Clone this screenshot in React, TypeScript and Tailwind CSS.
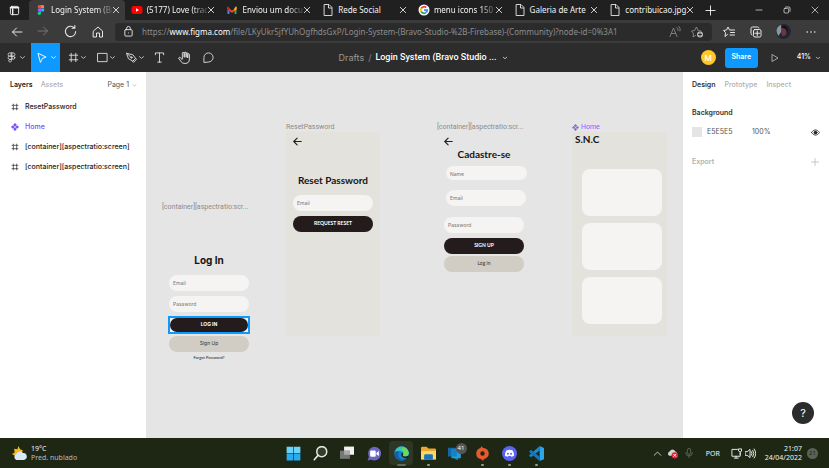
import React from "react";

type P = { className?: string; children?: React.ReactNode };

const ui = "font-['Noto_Sans','Open_Sans',sans-serif]";

function Line({ className = "size-3", children }: P) {
  return (
    <svg viewBox="0 0 24 24" className={"shrink-0 " + className} fill="none" stroke="currentColor" strokeWidth="2" strokeLinecap="round" strokeLinejoin="round" aria-hidden="true">
      {children}
    </svg>
  );
}

const Chevron = ({ className = "size-2" }: P) => (
  <Line className={className}><path d="M5 9l7 6 7-6" strokeWidth="2.6" /></Line>
);
const Frame = ({ className }: P) => (
  <Line className={className}><path d="M7 2v20M17 2v20M2 7h20M2 17h20" strokeLinecap="butt" /></Line>
);
const Back = ({ className }: P) => (
  <Line className={className}><path d="M22 12H3M11 4l-8 8 8 8" /></Line>
);
const ScreenBack = () => (
  <Line className="size-[9px] text-[#222]"><path d="M22 12H3M11 3l-9 9 9 9" strokeWidth="3" /></Line>
);
const Component = ({ className = "size-2" }: P) => (
  <svg viewBox="0 0 24 24" className={"shrink-0 " + className} fill="currentColor" aria-hidden="true">
    <path d="M12 0l5.500 5.500-5.500 5.500-5.500-5.500zM12 13l5.500 5.500-5.500 5.500-5.500-5.500zM5.500 6.500l5.500 5.500-5.500 5.500L0 12zM18.500 6.500L24 12l-5.500 5.500L13 12z" />
  </svg>
);
const Page = () => (
  <Line className="size-3 text-gray-200"><path d="M5 1h9l6 6v16H5zM13 2v6h6" strokeWidth="1.8" /></Line>
);
const Figma = () => (
  <svg viewBox="0 0 16 24" className="h-[10px] w-3 shrink-0" aria-hidden="true">
    <path d="M8 0H4a4 4 0 000 8h4z" fill="#f24e1e" />
    <path d="M8 0h4a4 4 0 010 8H8z" fill="#ff7262" />
    <path d="M8 8H4a4 4 0 000 8h4z" fill="#a259ff" />
    <circle cx="12" cy="12" r="4" fill="#1abcfe" />
    <path d="M8 16H4a4 4 0 104 4z" fill="#0acf83" />
  </svg>
);
const YouTube = () => (
  <svg viewBox="0 0 24 24" className="size-3 shrink-0" aria-hidden="true">
    <rect x="1" y="4" width="22" height="16" rx="5" fill="#f00" />
    <path d="M10 8.500v7l6-3.500z" fill="#fff" />
  </svg>
);
const Gmail = () => (
  <svg viewBox="0 0 24 24" className="size-3 shrink-0" aria-hidden="true">
    <path d="M3 6v14h4V9z" fill="#4285f4" />
    <path d="M21 6v14h-4V9z" fill="#34a853" />
    <path d="M3 6l9 7 9-7v5l-9 7-9-7z" fill="#ea4335" />
    <path d="M17 8l4-4v7l-4 3z" fill="#fbbc04" />
    <path d="M3 4l4 4v6l-4-3z" fill="#c5221f" />
  </svg>
);
const Google = () => (
  <svg viewBox="0 0 24 24" className="size-3 shrink-0" aria-hidden="true">
    <circle cx="12" cy="12" r="11" fill="#fff" />
    <g fill="none" strokeWidth="3.500">
      <path d="M6.300 9A6.500 6.500 0 0116.500 7.200" stroke="#ea4335" />
      <path d="M6.300 15a6.500 6.500 0 010-6" stroke="#fbbc05" />
      <path d="M16.500 16.800A6.500 6.500 0 016.300 15" stroke="#34a853" />
      <path d="M12 12h6.500a6.500 6.500 0 01-2 4.800" stroke="#4285f4" />
    </g>
  </svg>
);

const fade = "[mask-image:linear-gradient(to_right,black_75%,transparent_105%)]";

const tabs = [
  { icon: <Figma />, title: "Login System (Br", active: true, long: true },
  { icon: <YouTube />, title: "(5177) Love (trad", long: true },
  { icon: <Gmail />, title: "Enviou um docu", long: true },
  { icon: <Page />, title: "Rede Social" },
  { icon: <Google />, title: "menu icons 150", long: true },
  { icon: <Page />, title: "Galeria de Arte" },
  { icon: <Page />, title: "contribuicao.jpg" },
];

function IconButton({ label, className = "", children }: P & { label: string }) {
  return (
    <button type="button" aria-label={label} className={"flex shrink-0 items-center justify-center " + className}>
      {children}
    </button>
  );
}

function BrowserTabs() {
  return (
    <div className={"flex h-5 items-stretch bg-[#202020] text-[8px] text-gray-100 " + ui}>
      <IconButton label="Tab actions" className="w-[29px]">
        <Line className="size-[11px]"><rect x="3" y="3" width="18" height="18" rx="3" /><path d="M3 6h18M8 9v12" strokeWidth="3" /></Line>
      </IconButton>
      <div className="flex min-w-0 flex-[0_1_670px]">
        {tabs.map((t) => (
          <div key={t.title} className={"flex min-w-0 flex-1 items-center pr-[5px] pl-[6px] " + (t.active ? "rounded-t bg-[#3b3b3b]" : "relative after:absolute after:right-0 after:h-3 after:w-px after:bg-[#4a4a4a]")}>
            {t.icon}
            <button type="button" className={"ml-1 min-w-0 flex-1 text-left whitespace-nowrap " + (t.long ? fade : "")}>{t.title}</button>
            <IconButton label={"Close " + t.title} className="w-2">
              <Line className="size-2"><path d="M4 4l16 16M20 4L4 20" strokeWidth="2.500" /></Line>
            </IconButton>
          </div>
        ))}
      </div>
      <IconButton label="New tab" className="w-[22px]"><Line className="size-[11px]"><path d="M12 2v20M2 12h20" /></Line></IconButton>
      <div className="ml-auto flex">
        <IconButton label="Minimize" className="w-7"><Line className="size-2"><path d="M3 12h18" /></Line></IconButton>
        <IconButton label="Restore" className="w-7"><Line className="size-2"><rect x="3" y="7" width="14" height="14" rx="3" /><path d="M8 3h10a3 3 0 013 3v10" /></Line></IconButton>
        <IconButton label="Close window" className="w-7"><Line className="size-2"><path d="M3 3l18 18M21 3L3 21" /></Line></IconButton>
      </div>
    </div>
  );
}

function AddressRow() {
  return (
    <div className={"flex h-[23px] items-center border-b border-[#505050] bg-[#3b3b3b] text-gray-200 " + ui}>
      <nav className="flex w-[115px] shrink-0 pl-[3px]">
        <IconButton label="Back" className="w-[27px]"><Back className="size-3" /></IconButton>
        <IconButton label="Forward" className="w-[27px] rotate-180 text-[#777]"><Back className="size-3" /></IconButton>
        <IconButton label="Refresh" className="w-[27px]"><Line className="size-[13px]"><path d="M19 5.500A9.500 9.500 0 1021.500 12M20 1v5h-5" /></Line></IconButton>
        <IconButton label="Home" className="w-[27px]"><Line className="size-3"><path d="M3 10l9-8 9 8v12h-6v-8H9v8H3z" /></Line></IconButton>
      </nav>
      <label className="flex h-[18px] min-w-0 flex-1 items-center rounded bg-[#2b2b2b] pr-1 pl-2 text-[8px] text-[#8d8d8d]">
        <Line className="mr-2 size-[11px] text-gray-200"><rect x="4" y="8" width="16" height="14" rx="2" /><path d="M8 8V5a4 4 0 018 0v3M12 15h.01" /></Line>
        <span>https://</span>
        <span className="text-white">www.figma.com</span>
        <input aria-label="Address" className="min-w-0 flex-1 bg-transparent outline-none" defaultValue="/file/LKyUkr5jfYUhOgfhdsGxP/Login-System-(Bravo-Studio-%2B-Firebase)-(Community)?node-id=0%3A1" />
        <IconButton label="Read aloud" className="w-[22px]"><Line className="size-3"><path d="M2 21L9 4l7 17M5 15h8M16 3q3 2 2 6M20 1q4 4 2 9" strokeWidth="1.700" /></Line></IconButton>
        <IconButton label="Add to favourites" className="w-[22px]">
          <Line className="size-3"><path d="M9 19l-5 3 1-7-4-5 6-1 4-7 3 7 6 1" strokeWidth="1.800" /><circle cx="18" cy="17" r="6" fill="#bbb" stroke="none" /><path d="M18 14v6M15 17h6" stroke="#2b2b2b" /></Line>
        </IconButton>
      </label>
      <div className="ml-[3px] flex shrink-0">
        <IconButton label="Favourites" className="w-[27px]"><Line className="size-3"><path d="M9 17l-5 4 1-8-4-4 6-1 3-6 3 6h10M15 13h8M14 18h9" /></Line></IconButton>
        <IconButton label="Collections" className="w-[27px]"><Line className="size-3"><rect x="7" y="7" width="15" height="15" rx="3" /><path d="M4 18a3 3 0 01-2-3V5a3 3 0 013-3h10a3 3 0 013 2M14.500 10v9M10 14.500h9" /></Line></IconButton>
        <IconButton label="Profile" className="w-[28px]">
          <svg viewBox="0 0 24 24" className="size-[15px]"><circle cx="12" cy="12" r="12" fill="#222536" /><path d="M2 6a12 12 0 016-5l1 10-5 8a12 12 0 01-2-13" fill="#8597a5" /><path d="M9 6q6-4 8 3l-1 8-5 3-3-6z" fill="#6e3736" /><path d="M8 5q6-6 10 1l1 9-4-7z" fill="#16111a" /></svg>
        </IconButton>
        <IconButton label="Settings and more" className="w-[32px] pr-1"><Line className="size-[10px]"><path d="M3 12h.01M12 12h.01M21 12h.01" strokeWidth="4" /></Line></IconButton>
      </div>
    </div>
  );
}

function FigmaToolbar() {
  return (
    <header className="grid h-[29px] grid-cols-[1fr_auto_1fr] items-center bg-[#2c2c2c] font-['Inter',sans-serif] text-[8px] text-[#ddd]">
      <div className="flex h-full">
        <IconButton label="Main menu" className="w-[31px] gap-[2px]">
          <Line className="size-[11px]"><path d="M12 2H8a3 3 0 000 7h4zM12 2h4a3 3 0 010 7h-4zM12 9H8a3 3 0 000 7h4zM12 16H8a3 3 0 104 3z" strokeWidth="1.800" /><circle cx="16" cy="12.500" r="3.300" strokeWidth="1.800" /></Line><Chevron className="size-[7px]" />
        </IconButton>
        <IconButton label="Move" className="mr-[3px] w-[29px] gap-[3px] bg-[#0d99ff] pl-px text-white">
          <Line className="size-[11px]"><path d="M5 3l17 8-8 3-4 8z" /></Line><Chevron className="size-[7px]" />
        </IconButton>
        <IconButton label="Frame" className="w-[29px] gap-px"><Frame className="size-[11px]" /><Chevron className="size-[7px]" /></IconButton>
        <IconButton label="Rectangle" className="w-[29px] gap-px"><Line className="size-[11px]"><path d="M2 3h20v18H2z" /></Line><Chevron className="size-[7px]" /></IconButton>
        <IconButton label="Pen" className="w-[29px] gap-px"><Line className="size-[11px]"><path d="M2 3l13 3 6 8-6 6-9-5zM2 3l9 9M15 20l6-6 2 2-6 6z" /><circle cx="12" cy="12" r="1.500" /></Line><Chevron className="size-[7px]" /></IconButton>
        <IconButton label="Text" className="w-[18px]"><Line className="size-[11px]"><path d="M3 6V2h18v4M12 2v20M8 22h8" /></Line></IconButton>
        <IconButton label="Hand" className="w-8"><Line className="size-[13px]"><path d="M7 15L4 12q-2-1-3 1l5 7q2 3 7 3 8 0 8-8V6q-2-2-3 0v6M18 12V4q-2-2-3 0v7M15 11V3q-2-2-3.500 0v8M11.500 11V4Q9-0 8 4v11" strokeWidth="1.800" /></Line></IconButton>
        <IconButton label="Comment" className="w-4"><Line className="size-[11px]"><path d="M2 22V12a10 10 0 1110 10z" /></Line></IconButton>
      </div>
      <div className="flex items-center gap-1 pl-[18px] text-[9px]">
        <a href="#drafts" className="text-[#999]">Drafts</a>
        <span className="text-[#888]">/</span>
        <button type="button" className="flex items-center gap-[6px] font-['Roboto',sans-serif] font-medium whitespace-nowrap text-white">Login System (Bravo Studio ...<Chevron className="size-[6px]" /></button>
      </div>
      <div className="flex items-center justify-end">
        <span className="mr-[9px] flex size-[15px] items-center justify-center rounded-full bg-[#ffc727] font-medium text-white">M</span>
        <button type="button" className="h-5 w-[33px] rounded-[3px] bg-[#0d99ff] text-[7px] font-semibold text-white">Share</button>
        <IconButton label="Present" className="mr-1 w-[35px]"><Line className="size-2"><path d="M4 2l17 10L4 22z" /></Line></IconButton>
        <label className="flex items-center gap-1 pr-2">
          <select aria-label="Zoom" className="appearance-none bg-transparent text-[7px] font-medium text-white [field-sizing:content]"><option>41%</option></select>
          <Chevron className="size-[6px]" />
        </label>
      </div>
    </header>
  );
}

const layers = [
  { name: "ResetPassword" },
  { name: "Home", component: true },
  { name: "[container][aspectratio:screen]" },
  { name: "[container][aspectratio:screen]" },
];

function LayersPanel() {
  return (
    <aside className="border-r border-[#e5e5e5] bg-white text-[#222]">
      <div className="flex h-[26px] items-center border-b border-[#e5e5e5] pr-[9px] pl-[10px]">
        <button type="button" className="font-semibold">Layers</button>
        <button type="button" className="ml-2 font-medium text-[#b0b0b0]">Assets</button>
        <label className="ml-auto flex items-center gap-[3px] text-[#555]">
          <select aria-label="Page" className="appearance-none bg-transparent [field-sizing:content]"><option>Page 1</option></select>
          <Chevron className="size-[5px] text-[#999]" />
        </label>
      </div>
      <ul className="-mt-px">
        {layers.map((l, i) => (
          <li key={i} className={l.component ? "text-[#7b4dff]" : ""}>
            <button type="button" className="flex h-5 w-full items-center gap-[6px] pl-[11px] font-medium">
              {l.component ? <Component /> : <Frame className="size-2" />}
              {l.name}
            </button>
          </li>
        ))}
      </ul>
    </aside>
  );
}

const design = "font-['Lato',sans-serif]";

function Field({ label, className = "h-4 w-20" }: { label: string; className?: string }) {
  return <input aria-label={label} placeholder={label} className={"block shrink-0 rounded-full bg-[#f5f4f2] px-1 font-['Inter',sans-serif] text-[5px] font-medium placeholder:text-black placeholder:opacity-100 " + className} />;
}
function Pill({ dark, size = "h-4 w-20", className = "", children }: P & { dark?: boolean; size?: string }) {
  return <button type="button" className={"block shrink-0 rounded-full text-[5px] " + size + " " + (dark ? "bg-[#241c1c] font-bold text-white " : "bg-[#d1cdc4] text-[#333] ") + className}>{children}</button>;
}
const Label = ({ className = "text-[#8c8c8c]", children }: P) => (
  <div className={"flex h-[10px] items-center gap-[2px] font-['Roboto',sans-serif] text-[7px] whitespace-nowrap " + className}>{children}</div>
);
const Title = ({ className = "", children }: P) => (
  <h2 className={"text-center text-[10px] leading-[12px] font-bold whitespace-nowrap text-[#181314] " + className}>{children}</h2>
);

function Canvas() {
  return (
    <main className={"relative min-w-0 overflow-hidden bg-[#e5e5e5] " + design}>
      <section className="absolute top-[130px] left-4 w-[94px]">
        <Label>[container][aspectratio:scr...</Label>
        <div className="px-[7px] pt-[42px]">
          <Title className="font-['Inter',sans-serif]">Log In</Title>
          <div className="mt-[9px] flex flex-col gap-[5px]">
            <Field label="Email" />
            <Field label="Password" />
            <div className="-m-px h-[18px] w-[82px] bg-[#0d99ff] p-[2px]">
              <div className="h-full bg-[#f1f2f4]">
                <Pill dark size="h-full w-full" className="font-['Inter',sans-serif]">LOG IN</Pill>
              </div>
            </div>
          </div>
          <Pill className="mt-[3px] font-['Inter',sans-serif]">Sign Up</Pill>
          <a href="#forgot" className="mt-[2px] block text-center text-[4px] leading-[7px] text-[#222]">Forgot Password?</a>
        </div>
      </section>

      <section className="absolute top-[50px] left-[140px] w-[94px]">
        <Label>ResetPassword</Label>
        <div className="h-[204px] bg-[#e3e2dc] px-[7px] pt-[5px]">
          <ScreenBack />
          <Title className="mt-7">Reset Password</Title>
          <div className="mt-[9px] flex flex-col gap-[5px]">
            <Field label="Email" />
            <Pill dark>REQUEST RESET</Pill>
          </div>
        </div>
      </section>

      <section className="absolute top-[50px] left-[291px] w-[94px]">
        <Label>[container][aspectratio:scr...</Label>
        <div className="px-[7px] pt-[5px]">
          <ScreenBack />
          <Title className="mt-[2px]">Cadastre-se</Title>
          <div className="ml-[2px] flex flex-col gap-[10px] pt-[6px]">
            <Field label="Name" className="h-[14px] w-[81px] pt-[2px]" />
            <Field label="Email" />
          </div>
          <div className="mt-[11px] flex flex-col gap-[5px]">
            <Field label="Password" />
            <Pill dark>SIGN UP</Pill>
          </div>
          <Pill className="mt-[2px]">Log in</Pill>
        </div>
      </section>

      <section className="absolute top-[50px] left-[426px] w-[95px]">
        <Label className="text-[#8a63ff]"><Component className="size-[7px]" />Home</Label>
        <div className="h-[204px] bg-[#e3e2dc] px-[3px] pt-px">
          <Title className="text-left">S.N.C</Title>
          <div className="mt-6 ml-[7px] flex flex-col gap-[7px]">
            {[0, 1, 2].map((n) => (
              <div key={n} className="h-[47px] w-20 rounded-lg bg-[#f5f4f2] ring-1 ring-[#eae9e3]" />
            ))}
          </div>
        </div>
      </section>
    </main>
  );
}

function DesignPanel() {
  return (
    <aside className="relative border-l border-[#e5e5e5] bg-white text-[#333]">
      <div className="flex h-[26px] items-center gap-[9px] border-b border-[#e5e5e5] pl-[9px] font-medium text-[#b0b0b0]">
        <button type="button" className="font-semibold text-[#333]">Design</button>
        <button type="button">Prototype</button>
        <button type="button">Inspect</button>
      </div>
      <section className="h-[49px] border-b border-[#e5e5e5] px-[9px] pt-[10px]">
        <h3 className="leading-[10px] font-semibold">Background</h3>
        <div className="mt-[9px] flex h-[10px] items-center text-[#555]">
          <span className="size-[10px] border border-[#ddd] bg-[#e5e5e5]" />
          <input aria-label="Colour" defaultValue="E5E5E5" className="ml-[5px] w-[45px] bg-transparent" />
          <input aria-label="Opacity" defaultValue="100%" className="w-[30px] bg-transparent" />
          <IconButton label="Toggle visibility" className="ml-auto text-[#222]">
            <Line className="size-[9px]"><path d="M1 12q11-15 22 0-11 15-22 0z" /><circle cx="12" cy="12" r="4" fill="currentColor" /></Line>
          </IconButton>
        </div>
      </section>
      <section className="flex h-[30px] items-center justify-between border-b border-[#e5e5e5] pr-[10px] pl-[9px] text-[#b0b0b0]">
        <h3 className="font-semibold">Export</h3>
        <IconButton label="Add export"><Line className="size-2"><path d="M12 1v22M1 12h22" /></Line></IconButton>
      </section>
      <button type="button" aria-label="Help" className="absolute right-[15px] bottom-[14px] flex size-[22px] items-center justify-center rounded-full bg-[#2c2c2c] text-[11px] text-white">?</button>
    </aside>
  );
}

const apps: { name: string; running?: boolean; active?: boolean; badge?: string; art: React.ReactNode }[] = [
  { name: "Start", art: <><path d="M1 1h10.500v10.500H1zM12.500 1H23v10.500H12.500z" fill="#6bd3fa" /><path d="M1 12.500h10.500V23H1zM12.500 12.500H23V23H12.500z" fill="#27acf2" /></> },
  { name: "Search", art: <><circle cx="14" cy="9" r="8" fill="#343d2c" stroke="#e5e7e2" strokeWidth="2.400" /><path d="M8 15l-6 7" stroke="#e5e7e2" strokeWidth="2.600" strokeLinecap="round" /></> },
  { name: "Task view", art: <><path d="M7 1h17v14H7z" fill="#f2f2f2" /><path d="M0 8h17v14H0z" fill="#777" /><path d="M7 8h10v7H7z" fill="#aaa" /></> },
  { name: "Chat", art: <><path d="M12 1a11 11 0 11-5 21l-6 1 2-6A11 11 0 0112 1z" fill="#6d65c5" /><rect x="5" y="7" width="9" height="10" rx="2" fill="#fff" /><path d="M15 11l4-3v8l-4-3z" fill="#fff" /></> },
  { name: "Edge", running: true, active: true, art: <><circle cx="12" cy="12" r="11.500" fill="#1683cf" /><path d="M1 9C5-2 20-2 23 9q2 7-5 8-6 0-4-4 1-5-5-5-5-1-8 1z" fill="#36c6b8" /><path d="M16 2q8 3 7.500 10-1 5-7 5-4-1-2-4 3-5-3-8z" fill="#69d85b" /><path d="M9 9q-5 6 1 11 5 4 11-1-5 6-12 4Q0 19 1 11q3-3 8-2z" fill="#1360aa" /><path d="M13 10q3 2 1 5 2 3 7 1l3 0-2 4q-6 0-9-3-3-3 0-7z" fill="#1e2714" /></> },
  { name: "File Explorer", running: true, art: <><path d="M0 3q0-2 2-2h7l3 3h10q2 0 2 2v16H0z" fill="#e9a82b" /><path d="M0 8h24v13H0z" fill="#ffd563" /><path d="M5 15q0-2 2-2h10q2 0 2 2v7H5z" fill="#1677be" /></> },
  { name: "Phone", badge: "41", art: <><path d="M0 3h15v15H0z" fill="#1267a4" /><path d="M6 5h16v16H6z" fill="#239ddd" /><path d="M6 5h9v13H6z" fill="#1581c7" /><path d="M10 21h7v3z" fill="#239ddd" /></> },
  { name: "Origin", running: true, art: <><path d="M10 0l3 3q9 1 9 9 0 7-8 9l-1 3-3-3q-8-1-8-9 0-7 7-9z" fill="#e65a2d" /><circle cx="12" cy="12" r="3.500" fill="#1e2714" /></> },
  { name: "Discord", running: true, art: <><circle cx="12" cy="12" r="12" fill="#5865f2" /><path d="M7 7q5-2 10 0 3 5 2 9l-4 1-1-1h-4l-1 1-4-1q-1-4 2-9z" fill="#fff" /><circle cx="9.500" cy="12.500" r="1.600" fill="#5865f2" /><circle cx="14.500" cy="12.500" r="1.600" fill="#5865f2" /></> },
  { name: "Visual Studio Code", running: true, art: <><path d="M17 0l7 3v18l-7 3z" fill="#2aa5ec" /><path d="M17 0v7L3 18l-3-3z" fill="#1b87cc" /><path d="M17 24v-7L3 6 0 9z" fill="#1278bd" /></> },
];

function Taskbar() {
  return (
    <footer className={"grid h-[30px] grid-cols-[1fr_auto_1fr] items-center border-t border-[#59604f] bg-[#1e2714] text-[7px] leading-[9px] text-gray-100 " + ui}>
      <button type="button" className="flex items-center gap-1 pl-3 text-left">
        <svg viewBox="0 0 28 28" className="size-[15px]"><path d="M12 0l3 6 5 2-2 10-11 1-7-4 5-3-1-7 6 1z" fill="#f4b91f" /><path d="M8 26a6 6 0 010-11 7 7 0 0112-2 6 6 0 012 13z" fill="#d9e9f7" /></svg>
        <span>19°C<span className="block text-[#bbb]">Pred. nublado</span></span>
      </button>
      <div className="flex">
        {apps.map((a) => (
          <button key={a.name} type="button" aria-label={a.name} className="relative flex h-[29px] w-[27px] items-center justify-center">
            <span className={"flex size-6 items-center justify-center rounded-sm " + (a.active ? "bg-[#2e3726]" : "")}>
              <svg viewBox="0 0 24 24" className={a.name === "Task view" || a.name === "Phone" ? "size-[14px]" : "size-[15px]"}>{a.art}</svg>
            </span>
            {a.badge && <span className="absolute top-1 right-[2px] flex size-[11px] items-center justify-center rounded-full bg-[#555] text-[6px] text-white">{a.badge}</span>}
            {a.running && <span className={"absolute bottom-[2px] h-[2px] rounded-full " + (a.active ? "w-[9px] bg-[#666]" : "w-[3px] bg-[#999]")} />}
          </button>
        ))}
      </div>
      <div className="flex items-center justify-end pr-[11px]">
        <IconButton label="Hidden icons" className="w-[14px]"><Line className="size-[9px]"><path d="M3 17l9-9 9 9" /></Line></IconButton>
        <IconButton label="OneDrive" className="w-[15px]"><svg viewBox="0 0 24 24" className="size-[11px]"><path d="M5 17a5 5 0 010-9q7-9 14 0 4 1 4 9z" fill="#d5d5d5" /><circle cx="17" cy="16" r="7" fill="#e32235" /><path d="M14 13l6 6m0-6l-6 6" stroke="#fff" strokeWidth="2" /></svg></IconButton>
        <IconButton label="Microphone" className="w-[18px] text-[#666e5e]"><Line className="size-[10px]"><rect x="8" y="1" width="8" height="14" rx="4" /><path d="M4 11q0 8 8 8t8-8M12 19v4" /></Line></IconButton>
        <button type="button" className="mx-2">POR</button>
        <IconButton label="Network and volume" className="mx-[3px] gap-[3px]">
          <Line className="size-[11px]"><path d="M14 3H2v15h18v-6M7 22h9M11 18v4M17 2h6v5q-3 4-6 0zM20 9v5" /></Line>
          <Line className="size-[11px]"><path d="M1 8h4l6-5v18l-6-5H1zM14 8q3 4 0 8M17 5q5 7 0 14M20 2q7 10 0 20" /></Line>
        </IconButton>
        <button type="button" className="ml-[6px] text-right">21:07<span className="block">24/04/2022</span></button>
        <span className="ml-[5px] flex size-[11px] items-center justify-center rounded-full bg-[#5c6156] text-[6px] text-[#1e2714]">21</span>
      </div>
    </footer>
  );
}

export default function App() {
  return (
    <div className="flex min-h-screen flex-col overflow-hidden">
      <BrowserTabs />
      <AddressRow />
      <FigmaToolbar />
      <div className="grid min-h-[366px] flex-1 grid-cols-[146px_1fr_146px] font-['Inter',sans-serif] text-[7px]">
        <LayersPanel />
        <Canvas />
        <DesignPanel />
      </div>
      <Taskbar />
    </div>
  );
}
